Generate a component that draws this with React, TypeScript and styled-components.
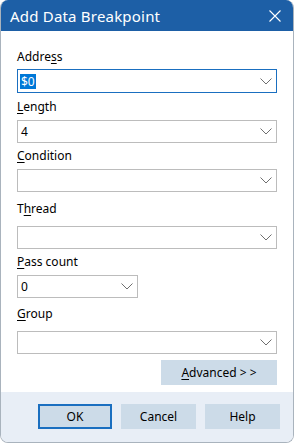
import styled, { createGlobalStyle } from "styled-components";

const Global = createGlobalStyle`
  html, body {
    margin: 0;
    padding: 0;
    background: #ffffff;
  }
  body {
    font-family: "Noto Sans", "Open Sans", sans-serif;
    color: #000;
  }
`;

const Window = styled.div`
  width: 294px;
  height: 443px;
  box-sizing: border-box;
  border: 1px solid #a9b3bd;
  border-top: none;
  border-radius: 8px;
  overflow: hidden;
  display: flex;
  flex-direction: column;
  background: #ffffff;
`;

const TitleBar = styled.div`
  height: 31px;
  background: #1d5fa6;
  color: #ffffff;
  display: flex;
  align-items: center;
  justify-content: space-between;
  padding: 0 12px 0 9px;
  font-size: 15px;
  flex-shrink: 0;
`;

const Title = styled.span`
  letter-spacing: 0.2px;
`;

const Body = styled.div`
  flex: 1;
  padding: 18px 16px 0 16px;
  display: flex;
  flex-direction: column;
`;

const Field = styled.div<{ $top: number; $gap: number }>`
  display: flex;
  flex-direction: column;
  margin-top: ${(p) => p.$top}px;
  gap: ${(p) => p.$gap}px;
`;

const Label = styled.label`
  font-size: 12px;
  line-height: 16px;
  height: 16px;
`;

const Key = styled.span`
  text-decoration: underline;
  text-underline-offset: 2px;
`;

const Combo = styled.div<{ $focus?: boolean; $width?: number; $height?: number }>`
  box-sizing: border-box;
  width: ${(p) => (p.$width ? `${p.$width}px` : "100%")};
  height: ${(p) => p.$height ?? 23}px;
  border: 1px solid ${(p) => (p.$focus ? "#1a6fc0" : "#bcbcbc")};
  display: flex;
  align-items: center;
  justify-content: space-between;
  padding: 0 4px 0 2px;
  font-size: 12px;
  background: #fff;
`;

const Value = styled.span<{ $selected?: boolean }>`
  padding: 0 1px;
  line-height: 15px;
  ${(p) => (p.$selected ? "background: #0078d7; color: #fff;" : "")}
`;

const Footer = styled.div`
  height: 50px;
  background: #e8eef6;
  display: flex;
  justify-content: flex-end;
  align-items: flex-start;
  gap: 9px;
  padding: 12px 13px 0 0;
  box-sizing: border-box;
  flex-shrink: 0;
`;

const Button = styled.div<{ $default?: boolean; $width?: number }>`
  box-sizing: border-box;
  width: ${(p) => p.$width ?? 75}px;
  height: 25px;
  background: #ccdbe8;
  border: ${(p) => (p.$default ? "2px solid #1a6fc0" : "none")};
  display: flex;
  align-items: center;
  justify-content: center;
  font-size: 12px;
`;

const AdvancedRow = styled.div`
  display: flex;
  justify-content: flex-end;
  margin-top: 6px;
`;

const Chevron = () => (
  <svg width="12" height="7" viewBox="0 0 12 7">
    <path d="M0.5 0.5 L6 6 L11.5 0.5" fill="none" stroke="#6f6f6f" strokeWidth="1" />
  </svg>
);

const CloseIcon = () => (
  <svg width="12" height="12" viewBox="0 0 12 12">
    <path d="M0.5 0.5 L11.5 11.5 M11.5 0.5 L0.5 11.5" stroke="#fff" strokeWidth="1.1" />
  </svg>
);

export default function App() {
  return (
    <>
      <Global />
      <Window>
        <TitleBar>
          <Title>Add Data Breakpoint</Title>
          <CloseIcon />
        </TitleBar>
        <Body>
          <Field $top={0} $gap={4}>
            <Label>
              Addre<Key>s</Key>s
            </Label>
            <Combo $focus $height={24}>
              <Value $selected>$0</Value>
              <Chevron />
            </Combo>
          </Field>
          <Field $top={6} $gap={5}>
            <Label>
              <Key>L</Key>ength
            </Label>
            <Combo>
              <Value>4</Value>
              <Chevron />
            </Combo>
          </Field>
          <Field $top={5} $gap={5}>
            <Label>
              <Key>C</Key>ondition
            </Label>
            <Combo>
              <Value />
              <Chevron />
            </Combo>
          </Field>
          <Field $top={9} $gap={9}>
            <Label>
              T<Key>h</Key>read
            </Label>
            <Combo>
              <Value />
              <Chevron />
            </Combo>
          </Field>
          <Field $top={5} $gap={5}>
            <Label>
              <Key>P</Key>ass count
            </Label>
            <Combo $width={121}>
              <Value>0</Value>
              <Chevron />
            </Combo>
          </Field>
          <Field $top={8} $gap={9}>
            <Label>
              <Key>G</Key>roup
            </Label>
            <Combo>
              <Value />
              <Chevron />
            </Combo>
          </Field>
          <AdvancedRow>
            <Button $width={116}>
              <span>
                <Key>A</Key>dvanced &gt; &gt;
              </span>
            </Button>
          </AdvancedRow>
        </Body>
        <Footer>
          <Button $default $width={74}>OK</Button>
          <Button>Cancel</Button>
          <Button>Help</Button>
        </Footer>
      </Window>
    </>
  );
}
